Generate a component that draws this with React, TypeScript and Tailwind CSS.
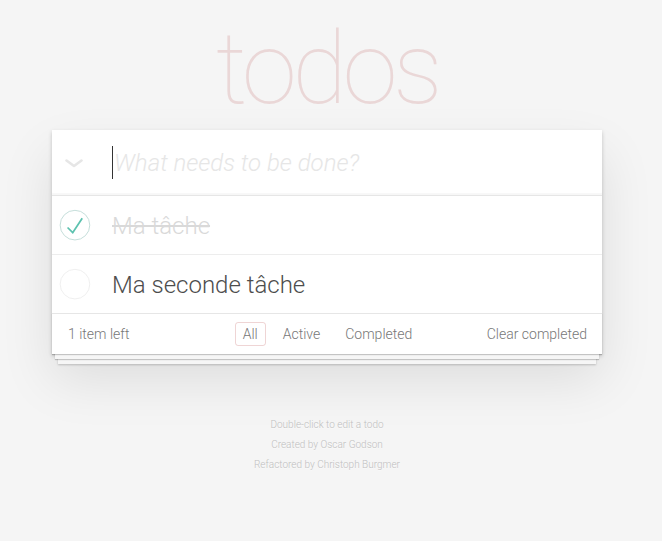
import { useState } from 'react';

type Todo = { id: number; title: string; completed: boolean };

const initialTodos: Todo[] = [
  { id: 1, title: 'Ma tâche', completed: true },
  { id: 2, title: 'Ma seconde tâche', completed: false },
];

function ToggleIcon({ checked }: { checked: boolean }) {
  return (
    <svg width="40" height="40" viewBox="-10 -18 100 135" className="shrink-0">
      <circle cx="50" cy="50" r="50" fill="none" stroke={checked ? '#bddad5' : '#ededed'} strokeWidth="3" />
      {checked && <path fill="#5dc2af" d="M72 25L42 71 27 56l-4 4 20 20 34-52z" />}
    </svg>
  );
}

export default function App() {
  const [todos, setTodos] = useState<Todo[]>(initialTodos);
  const left = todos.filter((t) => !t.completed).length;

  const toggle = (id: number) =>
    setTodos((ts) => ts.map((t) => (t.id === id ? { ...t, completed: !t.completed } : t)));

  return (
    <div
      className="min-h-[541px] w-full bg-[#f5f5f5] text-[#4d4d4d] font-light antialiased"
      style={{ fontFamily: 'Roboto, "Liberation Sans", sans-serif' }}
    >
      <div className="ml-[52px] w-[550px] pt-[19px]">
        {/* title */}
        <h1 className="h-[100px] text-center text-[100px] leading-[100px] font-thin tracking-[-0.045em] text-[rgba(175,47,47,0.15)]">
          todos
        </h1>

        <section className="mt-[11px] bg-white shadow-[0_2px_4px_0_rgba(0,0,0,0.2),0_25px_50px_0_rgba(0,0,0,0.1)]">
          {/* new todo */}
          <header className="flex h-[65px] items-center shadow-[inset_0_-2px_1px_rgba(0,0,0,0.03)]">
            <div className="flex w-[60px] pl-[13px]">
              <svg width="18" height="9" viewBox="0 0 18 9" className="mt-[1px]">
                <path d="M1.5 1.5 L9 7 L16.5 1.5" fill="none" stroke="#e6e6e6" strokeWidth="2.6" strokeLinecap="round" strokeLinejoin="round" />
              </svg>
            </div>
            <div className="flex items-center text-[24px] italic text-[#e6e6e6]">
              <span className="mr-[1px] h-[33px] w-[1px] bg-[#333]" />
              What needs to be done?
            </div>
          </header>

          {/* list */}
          <ul className="border-t border-[#e6e6e6]">
            {todos.map((t, i) => (
              <li
                key={t.id}
                className={`flex items-center ${i < todos.length - 1 ? 'border-b border-[#ededed]' : ''}`}
              >
                <button onClick={() => toggle(t.id)} className="flex h-[40px] w-[40px] items-center">
                  <ToggleIcon checked={t.completed} />
                </button>
                <label
                  className={`ml-[20px] pt-[16px] pb-[14px] text-[24px] leading-[28px] ${
                    t.completed ? 'text-[#d9d9d9] line-through' : 'text-[#4d4d4d]'
                  }`}
                >
                  {t.title}
                </label>
              </li>
            ))}
          </ul>

          {/* footer */}
          <footer className="relative flex h-[41px] items-center border-t border-[#e6e6e6] px-[15px] text-[14px] text-[#777] shadow-[0_1px_1px_rgba(0,0,0,0.2),0_8px_0_-3px_#f6f6f6,0_9px_1px_-3px_rgba(0,0,0,0.2),0_16px_0_-6px_#f6f6f6,0_17px_2px_-6px_rgba(0,0,0,0.2)]">
            <span className="ml-[1px] w-[150px]">
              {left} item{left === 1 ? '' : 's'} left
            </span>
            <ul className="flex flex-1 justify-center gap-[9px]">
              <li>
                <a className="rounded-[3px] border border-[rgba(175,47,47,0.2)] px-[7px] py-[3px]">All</a>
              </li>
              <li>
                <a className="rounded-[3px] border border-transparent px-[7px] py-[3px]">Active</a>
              </li>
              <li>
                <a className="rounded-[3px] border border-transparent px-[7px] py-[3px]">Completed</a>
              </li>
            </ul>
            <button className="w-[150px] text-right">Clear completed</button>
          </footer>
        </section>

        {/* info */}
        <footer className="mt-[66px] text-center text-[10px] leading-[10px] text-[#bfbfbf] [text-shadow:0_1px_0_rgba(255,255,255,0.5)]">
          <p>Double-click to edit a todo</p>
          <p className="mt-[10px]">Created by Oscar Godson</p>
          <p className="mt-[10px]">Refactored by Christoph Burgmer</p>
        </footer>
      </div>
    </div>
  );
}
